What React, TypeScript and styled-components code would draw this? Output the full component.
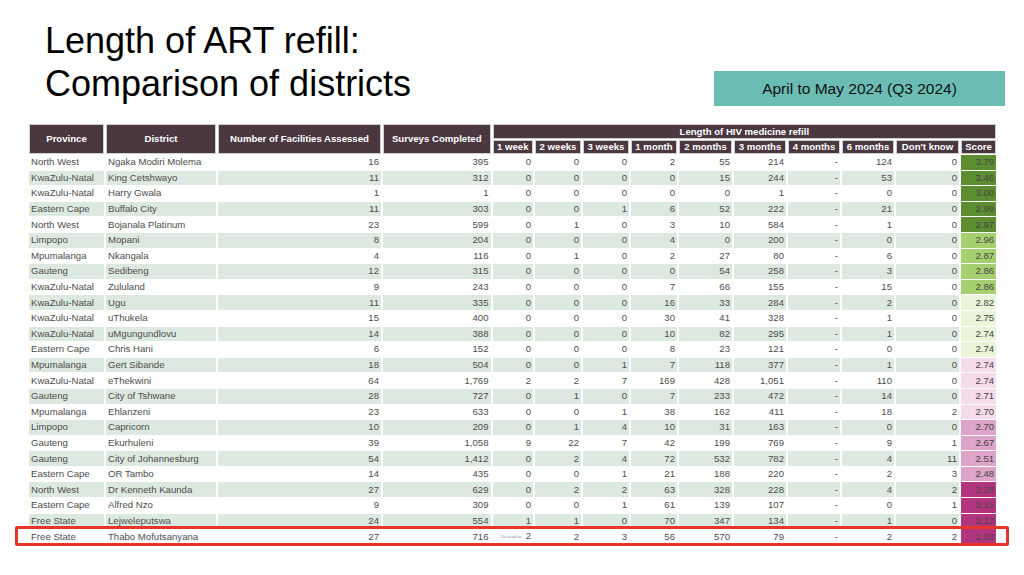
import React from 'react';
import styled, { createGlobalStyle } from 'styled-components';

type Row = {
  province: string;
  district: string;
  facilities: string;
  surveys: string;
  refill: string[];
  score: string;
  tier: number;
};

const rows: Row[] = [
  ['North West', 'Ngaka Modiri Molema', '16', '395', '0 0 0 2 55 214 - 124 0', '3.79', 0],
  ['KwaZulu-Natal', 'King Cetshwayo', '11', '312', '0 0 0 0 15 244 - 53 0', '3.46', 0],
  ['KwaZulu-Natal', 'Harry Gwala', '1', '1', '0 0 0 0 0 1 - 0 0', '3.00', 0],
  ['Eastern Cape', 'Buffalo City', '11', '303', '0 0 1 6 52 222 - 21 0', '2.99', 0],
  ['North West', 'Bojanala Platinum', '23', '599', '0 1 0 3 10 584 - 1 0', '2.97', 0],
  ['Limpopo', 'Mopani', '8', '204', '0 0 0 4 0 200 - 0 0', '2.96', 1],
  ['Mpumalanga', 'Nkangala', '4', '116', '0 1 0 2 27 80 - 6 0', '2.87', 1],
  ['Gauteng', 'Sedibeng', '12', '315', '0 0 0 0 54 258 - 3 0', '2.86', 1],
  ['KwaZulu-Natal', 'Zululand', '9', '243', '0 0 0 7 66 155 - 15 0', '2.86', 1],
  ['KwaZulu-Natal', 'Ugu', '11', '335', '0 0 0 16 33 284 - 2 0', '2.82', 2],
  ['KwaZulu-Natal', 'uThukela', '15', '400', '0 0 0 30 41 328 - 1 0', '2.75', 2],
  ['KwaZulu-Natal', 'uMgungundlovu', '14', '388', '0 0 0 10 82 295 - 1 0', '2.74', 2],
  ['Eastern Cape', 'Chris Hani', '6', '152', '0 0 0 8 23 121 - 0 0', '2.74', 2],
  ['Mpumalanga', 'Gert Sibande', '18', '504', '0 0 1 7 118 377 - 1 0', '2.74', 3],
  ['KwaZulu-Natal', 'eThekwini', '64', '1,769', '2 2 7 169 428 1,051 - 110 0', '2.74', 3],
  ['Gauteng', 'City of Tshwane', '28', '727', '0 1 0 7 233 472 - 14 0', '2.71', 3],
  ['Mpumalanga', 'Ehlanzeni', '23', '633', '0 0 1 38 162 411 - 18 2', '2.70', 3],
  ['Limpopo', 'Capricorn', '10', '209', '0 1 4 10 31 163 - 0 0', '2.70', 4],
  ['Gauteng', 'Ekurhuleni', '39', '1,058', '9 22 7 42 199 769 - 9 1', '2.67', 4],
  ['Gauteng', 'City of Johannesburg', '54', '1,412', '0 2 4 72 532 782 - 4 11', '2.51', 4],
  ['Eastern Cape', 'OR Tambo', '14', '435', '0 0 1 21 188 220 - 2 3', '2.48', 4],
  ['North West', 'Dr Kenneth Kaunda', '27', '629', '0 2 2 63 328 228 - 4 2', '2.28', 5],
  ['Eastern Cape', 'Alfred Nzo', '9', '309', '0 0 1 61 139 107 - 0 1', '2.15', 5],
  ['Free State', 'Lejweleputswa', '24', '554', '1 1 0 70 347 134 - 1 0', '2.12', 5],
  ['Free State', 'Thabo Mofutsanyana', '27', '716', '2 2 3 56 570 79 - 2 2', '2.03', 5],
].map(([province, district, facilities, surveys, refill, score, tier]) => ({
  province: province as string,
  district: district as string,
  facilities: facilities as string,
  surveys: surveys as string,
  refill: (refill as string).split(' '),
  score: score as string,
  tier: tier as number,
}));

const refillHeads = ['1 week', '2 weeks', '3 weeks', '1 month', '2 months', '3 months', '4 months', '6 months', "Don't know"];
const colWidths = [75, 110, 163, 107.5, 40.5, 46, 46, 46, 53, 52, 52, 52, 63, 35];
const scoreColors = ['#5d8d31', '#a6d06f', '#e9f4d9', '#f6dcea', '#dea3c9', '#b2347f'];

const GlobalStyle = createGlobalStyle`
  body {
    margin: 0;
    background: #ffffff;
    font-family: "Liberation Sans", Arial, sans-serif;
  }
`;

const Slide = styled.div`
  width: 1024px;
  height: 575px;
  padding-top: 19px;
  box-sizing: border-box;
  overflow: hidden;
`;

const TopBar = styled.div`
  display: flex;
  justify-content: space-between;
  align-items: flex-end;
  padding: 0 19px 0 45px;
`;

const Title = styled.h1`
  margin: 0;
  font-size: 36px;
  line-height: 43px;
  font-weight: 400;
  color: #000;
`;

const Period = styled.div`
  width: 291px;
  height: 35px;
  margin-bottom: -1px;
  display: flex;
  align-items: center;
  justify-content: center;
  background: #6bbdb3;
  font-size: 15.5px;
  color: #111;
`;

const TableWrap = styled.div`
  position: relative;
  margin: 18px 0 0 27px;
  width: 971px;
`;

const Table = styled.table`
  table-layout: fixed;
  border-collapse: separate;
  border-spacing: 2px 1px;
  width: 971px;
  font-size: 9.6px;
`;

const Head = styled.th<{ $h?: number }>`
  background: #4a373f;
  color: #fff;
  font-weight: 700;
  text-align: center;
  border: 1px solid #cfcfcf;
  padding: 0;
  height: ${({ $h }) => $h ?? 13}px;
  line-height: 10px;
  white-space: nowrap;
  overflow: hidden;
`;

const BodyRow = styled.tr<{ $shaded: boolean }>`
  & > td {
    background: ${({ $shaded }) => ($shaded ? '#dce9e0' : '#ffffff')};
  }
`;

const Cell = styled.td<{ $left?: boolean }>`
  height: 14.6px;
  padding: 0 2px;
  line-height: 14px;
  color: #4d4d4d;
  text-align: ${({ $left }) => ($left ? 'left' : 'right')};
  white-space: nowrap;
  overflow: hidden;
`;

const ScoreCell = styled(Cell)<{ $tier: number }>`
  && {
    background: ${({ $tier }) => scoreColors[$tier]};
  }
  color: #454545;
`;

const Ghost = styled.span`
  font-size: 3px;
  color: #8a8a8a;
  vertical-align: middle;
  margin-right: 4px;
`;

const Highlight = styled.div`
  position: absolute;
  left: -12px;
  right: -11px;
  bottom: -1px;
  height: 20px;
  border: 3px solid #e8342b;
  border-radius: 2px;
  box-sizing: border-box;
  pointer-events: none;
`;

export default function App() {
  return (
    <Slide>
      <GlobalStyle />
      <TopBar>
        <Title>
          Length of ART refill:
          <br />
          Comparison of districts
        </Title>
        <Period>April to May 2024 (Q3 2024)</Period>
      </TopBar>
      <TableWrap>
        <Table>
          <colgroup>
            {colWidths.map((w, i) => (
              <col key={i} style={{ width: w }} />
            ))}
          </colgroup>
          <thead>
            <tr>
              <Head rowSpan={2} $h={28}>Province</Head>
              <Head rowSpan={2} $h={28}>District</Head>
              <Head rowSpan={2} $h={28}>Number of Facilities Assessed</Head>
              <Head rowSpan={2} $h={28}>Surveys Completed</Head>
              <Head colSpan={10} $h={13}>Length of HIV medicine refill</Head>
            </tr>
            <tr>
              {refillHeads.map((h) => (
                <Head key={h} $h={12}>{h}</Head>
              ))}
              <Head $h={12}>Score</Head>
            </tr>
          </thead>
          <tbody>
            {rows.map((r, i) => (
              <BodyRow key={r.district} $shaded={i % 2 === 1}>
                <Cell $left>{r.province}</Cell>
                <Cell $left>{r.district}</Cell>
                <Cell>{r.facilities}</Cell>
                <Cell>{r.surveys}</Cell>
                {r.refill.map((v, j) => (
                  <Cell key={j}>
                    {i === rows.length - 1 && j === 0 && <Ghost>Click to add text</Ghost>}
                    {v}
                  </Cell>
                ))}
                <ScoreCell $tier={r.tier}>{r.score}</ScoreCell>
              </BodyRow>
            ))}
          </tbody>
        </Table>
        <Highlight />
      </TableWrap>
    </Slide>
  );
}
